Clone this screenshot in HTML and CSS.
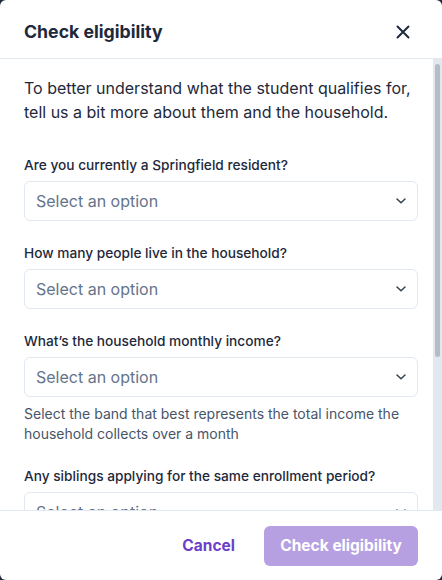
FILE: index.html
```html
<!DOCTYPE html>
<html lang="en">
<head>
    <meta charset="UTF-8">
    <title>Check eligibility</title>
    <link rel="stylesheet" href="styles.css">
</head>
<body>
<div class="modal">
    <div class="modalHeader">
        <h2>Check eligibility</h2>
        <span class="closeBtn">
            <svg width="14" height="14" viewBox="0 0 14 14"><path d="M1.5 1.5 L12.5 12.5 M12.5 1.5 L1.5 12.5" stroke="#1e293b" stroke-width="2" stroke-linecap="round"/></svg>
        </span>
    </div>
    <div class="modalBody">
        <div class="bodyContent">
            <p class="intro">To better understand what the student qualifies for, tell us a bit more about them and the household.</p>
            <div class="field">
                <label>Are you currently a Springfield resident?</label>
                <div class="select">
                    <span>Select an option</span>
                    <svg width="12" height="8" viewBox="0 0 12 8"><path d="M2 2 L6 5.8 L10 2" fill="none" stroke="#334155" stroke-width="1.5" stroke-linecap="round" stroke-linejoin="round"/></svg>
                </div>
            </div>
            <div class="field">
                <label>How many people live in the household?</label>
                <div class="select">
                    <span>Select an option</span>
                    <svg width="12" height="8" viewBox="0 0 12 8"><path d="M2 2 L6 5.8 L10 2" fill="none" stroke="#334155" stroke-width="1.5" stroke-linecap="round" stroke-linejoin="round"/></svg>
                </div>
            </div>
            <div class="field">
                <label>What’s the household monthly income?</label>
                <div class="select">
                    <span>Select an option</span>
                    <svg width="12" height="8" viewBox="0 0 12 8"><path d="M2 2 L6 5.8 L10 2" fill="none" stroke="#334155" stroke-width="1.5" stroke-linecap="round" stroke-linejoin="round"/></svg>
                </div>
                <p class="help">Select the band that best represents the total income the household collects over a month</p>
            </div>
            <div class="field">
                <label>Any siblings applying for the same enrollment period?</label>
                <div class="select">
                    <span>Select an option</span>
                    <svg width="12" height="8" viewBox="0 0 12 8"><path d="M2 2 L6 5.8 L10 2" fill="none" stroke="#334155" stroke-width="1.5" stroke-linecap="round" stroke-linejoin="round"/></svg>
                </div>
            </div>
        </div>
        <div class="scrollTrack">
            <div class="scrollThumb"></div>
        </div>
    </div>
    <div class="modalFooter">
        <button class="btn cancelBtn">Cancel</button>
        <button class="btn submitBtn" disabled>Check eligibility</button>
    </div>
</div>
</body>
</html>
```

FILE: styles.css
```css
*{
    margin: 0px;
    padding: 0px;
    box-sizing: border-box;
}
body{
    background-color: #1e293b;
    font-family: Inter, "Noto Sans", sans-serif;
    color: #1e293b;
}
.modal{
    width: 442px;
    height: 580px;
    background-color: #ffffff;
    border-radius: 6px;
    display: flex;
    flex-direction: column;
    overflow: hidden;
}
.modalHeader{
    height: 59px;
    flex-shrink: 0;
    display: flex;
    align-items: center;
    justify-content: space-between;
    padding: 0px 32px 0px 24px;
    border-bottom: 1px solid #e2e8f0;
}
.modalHeader h2{
    font-size: 17.7px;
    font-weight: 700;
    color: #1e293b;
    margin-top: 5px;
}
.closeBtn{
    display: flex;
    margin-top: 5px;
    cursor: pointer;
}
.modalBody{
    flex: 1;
    display: flex;
    overflow: hidden;
}
.bodyContent{
    flex: 1;
    padding: 17px 15px 24px 24px;
    overflow: hidden;
}
.scrollTrack{
    width: 9px;
    flex-shrink: 0;
    background-color: #e2e8f0;
    padding: 5px 2px 0px 1.5px;
}
.scrollThumb{
    height: 293px;
    border-radius: 4px;
    background-color: #b4bcc6;
}
.intro{
    font-size: 16px;
    line-height: 24px;
    color: #1e293b;
    margin-bottom: 31px;
}
.field{
    margin-bottom: 22px;
}
.field label{
    display: block;
    font-size: 13.7px;
    line-height: 20px;
    font-weight: 500;
    color: #1e293b;
    margin-bottom: 6px;
}
.select{
    height: 40px;
    border: 1px solid #e2e8f0;
    border-radius: 6px;
    display: flex;
    align-items: center;
    justify-content: space-between;
    padding: 0px 10px 0px 11px;
}
.select span{
    font-size: 16px;
    color: #64748b;
}
.help{
    font-size: 14px;
    line-height: 20px;
    color: #475569;
    margin-top: 7px;
}
.modalFooter{
    height: 70px;
    flex-shrink: 0;
    border-top: 1px solid #e2e8f0;
    display: flex;
    align-items: center;
    justify-content: flex-end;
    gap: 29px;
    padding: 0px 24px;
}
.btn{
    font-family: Inter, "Noto Sans", sans-serif;
    font-size: 15.5px;
    font-weight: 700;
    border: none;
    background: none;
    cursor: pointer;
}
.cancelBtn{
    color: #6d3fc9;
}
.submitBtn{
    height: 40px;
    width: 154px;
    border-radius: 6px;
    background-color: #b7a0e1;
    color: #ffffff;
}
```
